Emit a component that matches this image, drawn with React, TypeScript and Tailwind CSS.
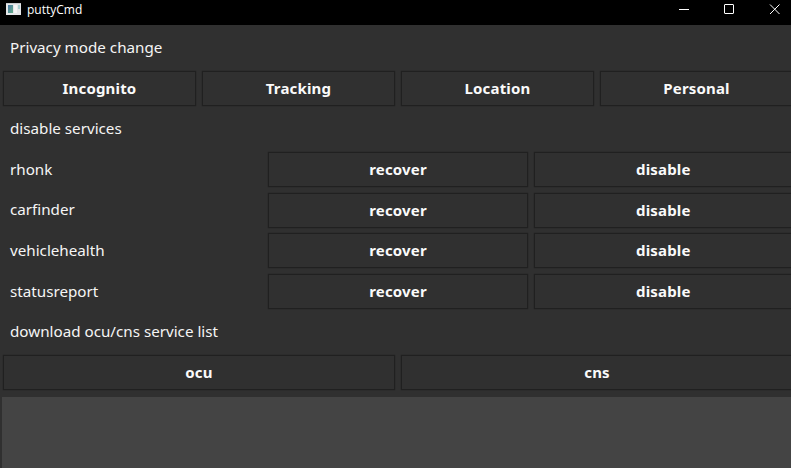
import React from "react";

function Label({ children }: { children: string }) {
  return <div className="flex h-[35px] items-center pb-[0.4px] pl-[7px] text-[15.2px] text-[#f5f5f5]">{children}</div>;
}

function Button({ children }: { children: string }) {
  return (
    <button className="h-[35px] border border-[#202020] bg-[#303030] text-center text-[15px] leading-[33px] font-bold tracking-[0.17px] text-[#fafafa] shadow-[0_0_1px_#222222]">
      {children}
    </button>
  );
}

const modes = ["Incognito", "Tracking", "Location", "Personal"];
const services = ["rhonk", "carfinder", "vehiclehealth", "statusreport"];

function TitleBar() {
  return (
    <header className="flex h-[25px] shrink-0 items-start bg-black">
      <svg className="ml-[6px] mt-[3px]" width="15" height="12" viewBox="0 0 15 12">
        <defs>
          <linearGradient id="pane" x1="0" y1="0" x2="1" y2="1">
            <stop offset="0" stopColor="#4b78a6" />
            <stop offset="1" stopColor="#63ac86" />
          </linearGradient>
        </defs>
        <rect width="15" height="12" fill="#e4e6e8" />
        <rect width="15" height="1" fill="#c5c9cc" />
        <rect x="2" y="2" width="5" height="8" fill="url(#pane)" />
        <rect x="8" y="2" width="3" height="8" fill="#f5f5f5" />
        <path d="M12 2h2v4h-2z" fill="#a9cfd1" />
      </svg>
      <h1 className="ml-[6px] mt-px font-['Open_Sans',sans-serif] text-[12px] leading-[17px]">puttyCmd</h1>
      <svg className="ml-auto mr-[10px] mt-[4px]" width="102" height="11" viewBox="0 0 102 11" fill="none" stroke="white">
        <path d="M0 5.5h10" />
        <rect x="45.5" y=".5" width="9" height="9" rx=".5" />
        <path d="M91 .5l9.5 9.5M100.5 .5l-9.5 9.5" />
      </svg>
    </header>
  );
}

export default function App() {
  return (
    <div className="flex h-[468px] w-[791px] flex-col overflow-hidden bg-[#303030] font-['Noto_Sans',sans-serif] text-white">
      <TitleBar />
      <main className="flex w-[793px] flex-1 flex-col gap-[5.6px] pl-[3px] pt-[5.2px]">
        <Label>Privacy mode change</Label>
        <div className="grid grid-cols-4 gap-[6px]">
          {modes.map((mode) => <Button key={mode}>{mode}</Button>)}
        </div>
        <Label>disable services</Label>
        {services.map((service) => (
          <div key={service} className="grid grid-cols-3 gap-[6px]">
            <Label>{service}</Label>
            <Button>recover</Button>
            <Button>disable</Button>
          </div>
        ))}
        <Label>download ocu/cns service list</Label>
        <div className="grid grid-cols-2 gap-[6px]">
          <Button>ocu</Button>
          <Button>cns</Button>
        </div>
        <div className="-ml-px mt-[1.4px] flex-1 bg-[#444444]" />
      </main>
    </div>
  );
}
